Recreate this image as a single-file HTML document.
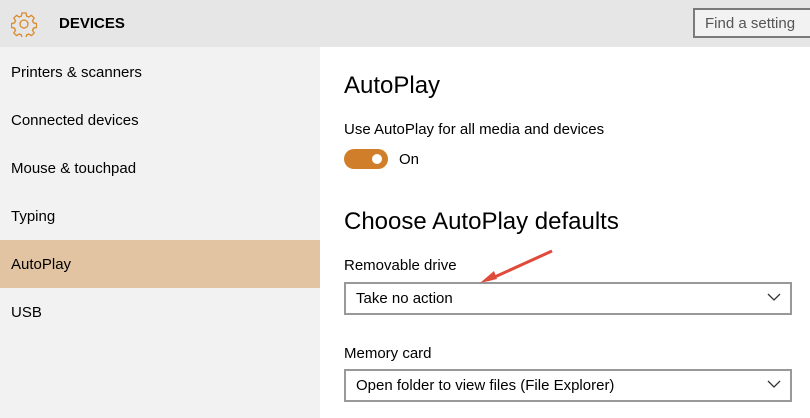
<!DOCTYPE html><html><head><style>
body{margin:0;width:810px;height:418px;overflow:hidden;font-family:"Liberation Sans",sans-serif;background:#fff;position:relative}
.hd{position:absolute;left:0;top:0;width:810px;height:47px;background:#e6e6e6}
.sb{position:absolute;left:0;top:47px;width:320px;height:371px;background:#f2f2f2}
.it{position:absolute;left:11px;font-size:15px;color:#000}
.t{position:absolute;color:#000}
.dd{position:absolute;left:344px;width:434px;height:29px;border:2px solid #999;font-size:15px;line-height:29px;padding-left:10px;box-sizing:content-box}
</style></head><body>
<div class="hd"></div>
<svg style="position:absolute;left:11px;top:11px" width="26" height="26" viewBox="0 0 26 26"><path d="M11 2h4l.6 3 2.2 1 2.6-1.7 2.8 2.8-1.7 2.6 1 2.2 3 .6v4l-3 .6-1 2.2 1.7 2.6-2.8 2.8-2.6-1.7-2.2 1-.6 3h-4l-.6-3-2.2-1-2.6 1.7-2.8-2.8 1.7-2.6-1-2.2-3-.6v-4l3-.6 1-2.2-1.7-2.6 2.8-2.8 2.6 1.7 2.2-1z" fill="none" stroke="#d98a2b" stroke-width="1.3"/><circle cx="13" cy="13" r="4" fill="none" stroke="#d98a2b" stroke-width="1.3"/></svg>
<div class="t" style="left:59px;top:15px;font-size:15px;font-weight:bold">DEVICES</div>
<div style="position:absolute;left:693px;top:8px;width:125px;height:30px;border:2px solid #7a7a7a;box-sizing:border-box;background:#f2f2f2;font-size:15px;color:#555;padding:5px 0 0 10px">Find a setting</div>
<div class="sb"></div>
<div style="position:absolute;left:0;top:240px;width:320px;height:48px;background:#e2c4a2"></div>
<div class="it" style="top:64px">Printers &amp; scanners</div>
<div class="it" style="top:112px">Connected devices</div>
<div class="it" style="top:160px">Mouse &amp; touchpad</div>
<div class="it" style="top:208px">Typing</div>
<div class="it" style="top:256px">AutoPlay</div>
<div class="it" style="top:304px">USB</div>
<div class="t" style="left:344px;top:72px;font-size:24px">AutoPlay</div>
<div class="t" style="left:344px;top:121px;font-size:15px">Use AutoPlay for all media and devices</div>
<div style="position:absolute;left:344px;top:149px;width:44px;height:20px;border-radius:10px;background:#d07e2a"></div>
<div style="position:absolute;left:372px;top:154px;width:10px;height:10px;border-radius:5px;background:#fff"></div>
<div class="t" style="left:399px;top:151px;font-size:15px">On</div>
<div class="t" style="left:344px;top:208px;font-size:24px">Choose AutoPlay defaults</div>
<div class="t" style="left:344px;top:257px;font-size:15px">Removable drive</div>
<div class="dd" style="top:282px">Take no action</div>
<div class="t" style="left:344px;top:345px;font-size:15px">Memory card</div>
<div class="dd" style="top:369px">Open folder to view files (File Explorer)</div>
<svg style="position:absolute;left:767px;top:292px" width="14" height="10"><path d="M1 2l6 6 6-6" fill="none" stroke="#333" stroke-width="1.3"/></svg>
<svg style="position:absolute;left:767px;top:379px" width="14" height="10"><path d="M1 2l6 6 6-6" fill="none" stroke="#333" stroke-width="1.3"/></svg>
<svg style="position:absolute;left:470px;top:245px" width="90" height="45"><path d="M82 6L18 35" stroke="#e04a3b" stroke-width="3"/><path d="M10 38l14-12 3 8z" fill="#e04a3b"/></svg>
</body></html>
